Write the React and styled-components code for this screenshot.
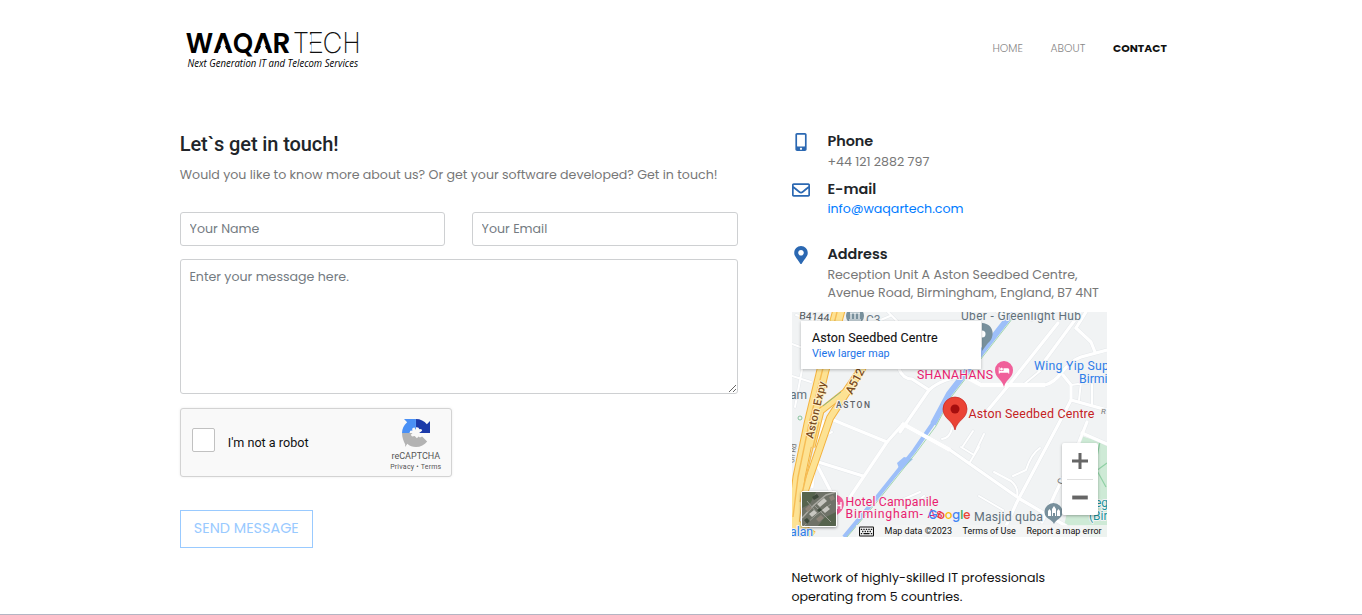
import React from "react";
import styled, { createGlobalStyle } from "styled-components";
import { FaMobileAlt, FaRegEnvelope, FaMapMarkerAlt, FaBed, FaRegKeyboard } from "react-icons/fa";

const Global = createGlobalStyle`
  *, *::before, *::after { box-sizing: border-box; }
  html, body { margin: 0; height: 100%; overflow: hidden; background: #fff; }
  body { font-family: Poppins, Inter, "Liberation Sans", sans-serif; font-size: 12.6px; color: #212529; }
  h2, h3, p { margin: 0; }
`;

const Page = styled.div`
  height: 615px;
  overflow: hidden;
  border-bottom: 1px solid #b4b5c3;
`;
const Header = styled.header`
  display: flex;
  justify-content: space-between;
  align-items: flex-start;
  width: 987px;
  height: 130px;
  margin-left: 180px;
  padding-top: 18px;
`;
const Logo = styled.svg`
  display: block;
  width: 184px;
  height: 60px;
`;
const Nav = styled.nav`
  display: flex;
  gap: 27px;
  padding-top: 20px;
`;
const NavLink = styled.a`
  width: ${(p) => p.$w}px;
  font-size: 10.8px;
  line-height: 21px;
  white-space: nowrap;
  font-weight: ${(p) => (p.$active ? 700 : 300)};
  color: ${(p) => (p.$active ? "#111" : "#888")};
`;
const Main = styled.main`
  display: grid;
  grid-template-columns: 558px 320px;
  column-gap: 53.6px;
  margin-left: 179.8px;
`;
const Title = styled.h2`
  font: 500 20px/28px Roboto, sans-serif;
  letter-spacing: -0.1px;
`;
const Line = styled.p`
  font-size: 12.6px;
  line-height: ${(p) => p.$lh || 18}px;
  color: ${(p) => p.$color || "#777"};
  white-space: nowrap;
`;
const Intro = styled(Line)`
  padding-top: 3px;
  line-height: 27px;
`;
const Label = styled.h3`
  font-size: 14.4px;
  line-height: 22px;
  font-weight: 600;
  color: #212529;
`;
const Detail = styled(Line)`
  position: relative;
  top: ${(p) => p.$drop || 0}px;
`;
const Form = styled.form`
  display: flex;
  flex-direction: column;
  align-items: flex-start;
  margin-top: 24px;
`;
const Fields = styled.div`
  display: grid;
  grid-template-columns: 265px 266px;
  gap: 27px;
  margin-bottom: 13px;
`;
const Input = styled.input`
  width: 100%;
  height: 34px;
  padding: 0 8.8px;
  border: 1px solid #ced0d2;
  border-radius: 3px;
  font: inherit;
  &::placeholder { color: #747b82; opacity: 1; }
`;
const Message = styled.textarea`
  display: block;
  width: 558px;
  height: 135px;
  padding: 7px 8.6px;
  border: 1px solid #ced0d2;
  border-radius: 3px;
  font: inherit;
  line-height: 20px;
  resize: vertical;
  &::placeholder { color: #747b82; opacity: 1; }
`;
const Captcha = styled.div`
  display: flex;
  align-items: center;
  width: 272px;
  height: 69px;
  margin: 14px 0 33px;
  padding: 0 9px 0 11px;
  border: 1px solid #d3d3d3;
  border-radius: 3px;
  background: #f9f9f9;
  box-shadow: 0 0 3px rgba(0, 0, 0, 0.08);
  font-family: Roboto, sans-serif;
`;
const CheckBox = styled.span`
  width: 23px;
  height: 24px;
  margin: -5px 13px 0 0;
  border: 1px solid #c1c1c1;
  border-radius: 2px;
  background: #fff;
`;
const CaptchaLabel = styled.span`
  flex: 1;
  font-size: 12.6px;
  line-height: 16px;
  color: #111;
`;
const Brand = styled.div`
  display: flex;
  flex-direction: column;
  align-items: center;
  width: 52px;
  padding-top: 6px;
  color: #555;
  white-space: nowrap;
`;
const BrandName = styled.span`
  margin-top: 3px;
  font-size: 9px;
  line-height: 12px;
`;
const BrandLinks = styled.span`
  font-size: 7px;
  line-height: 10px;
  letter-spacing: 0.22px;
`;
const Send = styled.button`
  width: 133px;
  height: 38px;
  padding: 0 0 2px;
  border: 1px solid #99caff;
  background: #fff;
  color: #99caff;
  font: inherit;
  font-size: 14.4px;
`;
const Contact = styled.section`
  display: grid;
  grid-template-columns: 18px 1fr;
  column-gap: 18px;
  height: ${(p) => p.$h}px;
`;
const IconBox = styled.span`
  display: flex;
  justify-content: center;
  padding: 3px 0 0 1px;
  color: #2b68b2;
  font-size: 18px;
  svg { flex: none; }
`;
const MapFrame = styled.div`
  position: relative;
  width: 315px;
  height: 225px;
  margin-left: 0.6px;
  overflow: hidden;
  font-family: Roboto, sans-serif;
`;
const MapArt = styled.svg`
  display: block;
  width: 315px;
  height: 225px;
`;
const MapCard = styled.div`
  position: absolute;
  left: 9px;
  top: 9px;
  width: 180px;
  height: 48px;
  padding: 9px 11px;
  background: #fff;
  box-shadow: 0 1px 3px rgba(0, 0, 0, 0.25);
`;
const CardTitle = styled.div`
  font-size: 12.5px;
  line-height: 16px;
  letter-spacing: 0.1px;
  -webkit-text-stroke: 0.1px #111;
  color: #111;
`;
const CardLink = styled.div`
  font-size: 10.8px;
  line-height: 15px;
  color: #1a73e8;
`;
const Zoom = styled.div`
  position: absolute;
  left: 270px;
  top: 131px;
  width: 36px;
  height: 72px;
  padding: 0 5px;
  border-radius: 2px;
  background: #fff;
  box-shadow: 0 1px 3px rgba(0, 0, 0, 0.3);
`;
const ZoomIcon = styled.svg`
  display: block;
  width: 26px;
  height: 36px;
  fill: #666;
  & + & { border-top: 1px solid #e0e0e0; }
`;
const Thumb = styled.svg`
  position: absolute;
  left: 9px;
  top: 179px;
  width: 36px;
  height: 36px;
  border: 1px solid #fff;
  border-radius: 2px;
  box-shadow: 0 1px 3px rgba(0, 0, 0, 0.4);
`;
const MapFooter = styled.div`
  position: absolute;
  right: 0;
  bottom: 0;
  display: flex;
  align-items: center;
  gap: 10.6px;
  width: 251px;
  height: 12px;
  padding-left: 3px;
  background: rgba(245, 245, 245, 0.8);
  font-size: 9px;
  line-height: 12px;
  color: #111;
  white-space: nowrap;
`;
const Summary = styled.div`
  padding-top: 31px;
`;

const ROADS = [
  "M107 57 Q111 67 120 67 L137 78 Q150 66 176 64 L189 73 L253 73 Q263 70 269 61 Q280 48 289 45 L315 38",
  "M266 11 L216 74 L196 98", "M288 1 L246 58",
  "M284 16 L299 30 L303 40", "M294 0 L284 16", "M271 63 L279 73 L279 88 L315 98",
  "M279 88 L266 113 L225 190 L209 225", "M137 78 L108 120",
  "M95 130 L51 112 L37 106", "M111 112 L158 138 L228 187 L274 214",
  "M111 112 L95 130 L58 185", "M23 149 L71 164", "M23 149 L40 182 L48 199",
  "M31 109 L23 149 L20 175", "M295 110 L279 150 L264 180 L250 210", "M290 121 L315 132",
];
const MINOR = [
  "M150 127 Q158 126 160 116 M171 134 L181 119 M169 135 L182 143 M182 143 L192 122 M178 150 L187 135",
  "M202 160 L219 169 Q227 176 225 184 M187 184 L211 198", "M221 164 L234 158 Q239 142 248 136",
  "M0 32 L27 42 M4 3 L24 9 M13 42 L3 95 M0 64 L19 70", "M96 0 L109 13 M70 16 L98 4",
  "M40 120 L14 133 M105 190 L128 180 M116 197 L132 184", "M279 73 L315 68 M289 70 L287 88 M300 70 L300 94",
  "M205 0 L240 8 M248 59 L231 73",
];

function CityMap() {
  return (
    <MapArt viewBox="0 0 315 225" fontFamily="Roboto, sans-serif">
      <rect width="315" height="225" fill="#f1f3f4" />
      <path d="M289 124 L315 132 V225 H297 L294 214 H272 L284 160 Z" fill="#ceead6" />
      <path d="M308 130 L303 155 L314 175 M315 151 L300 162 M282 190 L315 195" fill="none" stroke="#8fd0a4" strokeWidth="1.2" />
      <g fill="none" stroke="#e4e7ea" strokeLinecap="round" strokeLinejoin="round">
        {MINOR.map((d) => <path key={d} d={d} strokeWidth="3" />)}
        {ROADS.map((d) => <path key={d} d={d} strokeWidth="4" />)}
      </g>
      <g fill="none" stroke="#fff" strokeLinecap="round" strokeLinejoin="round">
        {MINOR.map((d) => <path key={d} d={d} strokeWidth="2" />)}
        {ROADS.map((d) => <path key={d} d={d} strokeWidth="3.2" />)}
      </g>
      <path d="M221 0 L157 82 L141 112" fill="none" stroke="#9dbff9" strokeWidth="6" />
      <path d="M142 110 L122 139 L106 159 L82 189 L52 225" fill="none" stroke="#9dbff9" strokeWidth="4.2" />
      <path d="M105 151 L112 145 L121 147 L108 159 Z" fill="#9dbff9" />
      <path d="M224 2 L160 84 L144 114 L124 141 L84 191 L55 225" fill="none" stroke="#8fcf9d" strokeWidth="0.8" />
      <path d="M111 112 L158 138 M176 66 L189 73 L253 73" fill="none" stroke="#fff" strokeWidth="4" />
      <g fill="none" strokeLinejoin="round">
        <path d="M47 -2 L31 58 L18 112 L7 165 L1 212 L20 225" stroke="#f3b23f" strokeWidth="13" />
        <path d="M75 48 L53 80 L29 99 L20 135" stroke="#f3b23f" strokeWidth="7" />
        <path d="M71 55 L38 106 L27 138 L9 190" stroke="#f3b23f" strokeWidth="8" />
        <path d="M47 -2 L31 58 L18 112 L7 165 L1 212 L20 225" stroke="#fde293" strokeWidth="11" />
        <path d="M75 48 L53 80 L29 99 L20 135" stroke="#fde293" strokeWidth="5" />
        <path d="M71 55 L38 106 L27 138 L9 190" stroke="#fde293" strokeWidth="6" />
        <path d="M45 0 L30 60 L17 112 L6 165 L1 205 M27 110 L8 190" stroke="#f6bd55" strokeWidth="1.4" />
      </g>
      <g fill="none" stroke="#6fb78a" strokeWidth="0.8"><path d="M31 94 L49 80" /><circle cx="8" cy="106" r="2" /></g>
      <g stroke="#f1f3f4" strokeWidth="2" paintOrder="stroke" strokeLinejoin="round">
        <text x="7" y="7" fontSize="10.5" fill="#4d5358" transform="rotate(5 7 7)">B4144</text>
        <text x="74" y="12" fontSize="12" fill="#6b7b86">C3</text>
        <text x="169" y="8" fontSize="12" fill="#5f707b" textLength="120">Uber - Greenlight Hub</text>
        <text x="-2" y="87" fontSize="12" fill="#5f707b">am</text>
        <text x="44" y="95.5" fontSize="8.5" fontWeight="500" fill="#5c6166" textLength="34">ASTON</text>
        <text transform="translate(21 127) rotate(-77)" fontSize="11" fontWeight="500" stroke="#fff1c8" fill="#7a4b1c" textLength="58">Aston Expy</text>
        <text transform="translate(60 83) rotate(-62)" fontSize="11.5" fontWeight="500" stroke="#fff1c8" fill="#7a4b1c">A512</text>
        <text transform="translate(2 151) rotate(-82)" fontSize="7.5" fill="#777">on Rd</text>
        <text x="125" y="67" fontSize="12.300" fill="#e91e70" textLength="76">SHANAHANS</text>
        <text x="242" y="58" fontSize="12.300" fill="#2f7de9" textLength="75">Wing Yip Sup</text>
        <text x="287" y="71" fontSize="12.300" fill="#2f7de9">Birmi</text>
        <text x="176.500" y="106" fontSize="12.500" fill="#c5221f" textLength="126">Aston Seedbed Centre</text>
        <text x="309" y="102" fontSize="8" fill="#777" fontStyle="italic">R</text>
        <text x="53.500" y="194" fontSize="12.300" fill="#e91e70" textLength="93">Hotel Campanile</text>
        <text x="53.500" y="206" fontSize="12.300" fill="#e91e70" textLength="97">Birmingham- As</text>
        <text x="182" y="209" fontSize="12.300" fill="#5f707b" textLength="69">Masjid quba</text>
        <text x="-2" y="224" fontSize="12.300" fill="#2f7de9">alan</text>
        <text x="303" y="195" fontSize="12" fill="#1c939b">eg</text>
        <text x="297" y="208" fontSize="12" fill="#1c939b">(Bir</text>
        <text transform="translate(271 173) rotate(-72)" fontSize="9" fill="#666">C</text>
      </g>
      <text x="136.500" y="207" fontSize="13" fontFamily="Poppins, sans-serif" fontWeight="500" textLength="42" lengthAdjust="spacingAndGlyphs">
        <tspan fill="#4285f4">G</tspan><tspan fill="#ea4335">o</tspan><tspan fill="#fbbc04">o</tspan><tspan fill="#4285f4">g</tspan><tspan fill="#34a853">l</tspan><tspan fill="#ea4335">e</tspan>
      </text>
      <g>
        <circle cx="63" cy="4" r="9" fill="#78909c" />
        <path d="M58 1 H68 M59 1 V7 M63 1 V7 M67 1 V7 M57 8 H69" stroke="#fff" strokeWidth="1.1" />
      </g>
      <path d="M190 11 C203 12 203 26 196 31 L190 39 Z" fill="#78909c" /><circle cx="190" cy="22" r="3.5" fill="#fff" />
      <path d="M212 75 C210 67 203 66 203 58 A9 9 0 0 1 221 58 C221 66 214 67 212 75 Z" fill="#f0609a" />
      <FaBed x="206.5" y="53" size="11" color="#fff" />
      <path d="M44 183 C53 184 55 196 46 202 L44 204 Z" fill="#f0609a" />
      <path d="M45 190 V197 M49 190 V197 M45 193.500 H49" stroke="#fff" strokeWidth="1.300" />
      <path d="M262 212 C260 207 252.500 207 252.500 200 A9 9 0 0 1 270.500 200 C270.500 207 264 207 262 212 Z" fill="#78909c" />
      <path d="M256 204 V199 L257.500 197 L259 199 V204 Z M260 204 V197 L262 194 L264 197 V204 H263 V201 H261 V204 Z M265 204 V199 L266.500 197 L268 199 V204 Z" fill="#fff" />
      <path d="M163 118 C161 108 151 107 151 97 A12 12 0 0 1 175 97 C175 107 165 108 163 118 Z" fill="#ea4335" stroke="#c5221f" strokeWidth="0.7" />
      <circle cx="163" cy="97" r="4.500" fill="#a50e0e" />
    </MapArt>
  );
}

function Satellite() {
  return (
    <Thumb viewBox="0 0 34 34">
      <rect width="34" height="34" fill="#6f7268" />
      <path d="M0 0 H14 L8 12 L0 16 Z M22 26 L34 20 V34 H16 Z" fill="#56644e" />
      <path d="M0 26 L12 13 L24 3 L34 0" fill="none" stroke="#aaa9a2" strokeWidth="1.5" />
      <path d="M2 34 L14 23 L29 12 M12 13 L29 30 M5 9 L15 21" fill="none" stroke="#999b93" />
      <path d="M15 12 L22 6 L25 9 L18 15 Z M7 22 L12 18 L15 21 L10 25 Z M20 18 L25 14 L28 17 L23 21 Z" fill="#c8c7c1" />
      <path d="M3 17 L7 13 L10 16 L6 20 Z M14 27 L19 23 L22 26 L17 30 Z M27 5 L31 3 L33 7 L29 9 Z" fill="#8d8479" />
      <path d="M10 5 L15 2 L17 5 L12 8 Z M15 18 L18 16 L20 18 L17 20 Z M2 28 L5 26 L8 29 L5 32 Z" fill="#3f4a3c" />
    </Thumb>
  );
}

function RecaptchaMark() {
  return (
    <svg width="28" height="28" viewBox="0 0 64 64">
      <path fill="#1c3aa9" d="M64 31.955V4.687l-7.160 7.160C50.948 4.674 42.033.093 32.050.093v18.500l5 1 3 4 4-1 2 4-7 5.360H64z" />
      <path fill="#4a90f5" d="M31.862.094H4.594l7.160 7.160C4.580 13.147 0 22.060 0 32.046h17l2-5 5-1-1-4 5-3 3.860 6V.094z" />
      <path fill="#b3b3b3" d="M0 32.045C0 42 4 52 7.200 57.943V64l5-7.200c5 5 12 7.200 19.800 7.200 10.390 0 19.622-4.960 25.476-12.643L46 40l-5 2-3-2-4 4-5-5-6 1-3-4 4-3.955z" />
    </svg>
  );
}

const BOLD = [["W", 5.8, 27.4], ["A", 33, 20], ["Q", 53, 20], ["A", 73, 20], ["R", 92.5, 18]];
const THIN = [["T", 113, 16], ["E", 127, 17], ["C", 142.5, 20], ["H", 162.5, 18]];

function BrandLogo() {
  const letters = (list) =>
    list.map(([ch, x, w]) => (
      <tspan key={x} x={x} textLength={w} lengthAdjust="spacingAndGlyphs">{ch}</tspan>
    ));
  return (
    <Logo viewBox="0 0 184 60">
      <text y="35.200" fontFamily="Poppins, sans-serif" fontWeight="600" fontSize="29" fill="#000">{letters(BOLD)}</text>
      <path d="M43 22.500 L48 36 H38 Z M83 22.500 L88 36 H78 Z" fill="#fff" />
      <text y="35.200" fontFamily="Inter, sans-serif" fontWeight="200" fontSize="28" fill="#111">{letters(THIN)}</text>
      <path d="M128 16.500 H131.500 V24 H128 Z M128 26.500 H131.500 V33.500 H128 Z" fill="#fff" />
      <text x="7.500" y="48.500" fontFamily="Open Sans, sans-serif" fontStyle="italic" fontSize="10.300" textLength="170.500" lengthAdjust="spacingAndGlyphs" fill="#000">Next Generation IT and Telecom Services</text>
    </Logo>
  );
}

export default function App() {
  return (
    <Page>
      <Global />
      <Header>
        <BrandLogo />
        <Nav>
          <NavLink $w={31}>HOME</NavLink>
          <NavLink $w={35.5}>ABOUT</NavLink>
          <NavLink $w={54} $active>CONTACT</NavLink>
        </Nav>
      </Header>
      <Main>
        <div>
          <Title>Let`s get in touch!</Title>
          <Intro>Would you like to know more about us? Or get your software developed? Get in touch!</Intro>
          <Form>
            <Fields>
              <Input placeholder="Your Name" />
              <Input placeholder="Your Email" />
            </Fields>
            <Message placeholder="Enter your message here." />
            <Captcha>
              <CheckBox />
              <CaptchaLabel>I'm not a robot</CaptchaLabel>
              <Brand>
                <RecaptchaMark />
                <BrandName>reCAPTCHA</BrandName>
                <BrandLinks>Privacy • Terms</BrandLinks>
              </Brand>
            </Captcha>
            <Send type="button">SEND MESSAGE</Send>
          </Form>
        </div>
        <aside>
          <Contact $h={48}>
            <IconBox><FaMobileAlt /></IconBox>
            <div>
              <Label>Phone</Label>
              <Detail $drop={1}>+44 121 2882 797</Detail>
            </div>
          </Contact>
          <Contact $h={65}>
            <IconBox><FaRegEnvelope /></IconBox>
            <div>
              <Label>E-mail</Label>
              <Detail $color="#007bff">info@waqartech.com</Detail>
            </div>
          </Contact>
          <Contact $h={69}>
            <IconBox><FaMapMarkerAlt /></IconBox>
            <div>
              <Label>Address</Label>
              <Detail $drop={1}>Reception Unit A Aston Seedbed Centre,</Detail>
              <Detail $drop={1}>Avenue Road, Birmingham, England, B7 4NT</Detail>
            </div>
          </Contact>
          <MapFrame>
            <CityMap />
            <MapCard>
              <CardTitle>Aston Seedbed Centre</CardTitle>
              <CardLink>View larger map</CardLink>
            </MapCard>
            <Zoom>
              <ZoomIcon viewBox="0 0 26 36"><path d="M5 16.500 H11.500 V10 H14.500 V16.500 H21 V19.500 H14.500 V26 H11.500 V19.500 H5 Z" /></ZoomIcon>
              <ZoomIcon viewBox="0 0 26 36"><path d="M5 16 H21 V20 H5 Z" /></ZoomIcon>
            </Zoom>
            <Satellite />
            <MapFooter>
              <FaRegKeyboard size={15} />
              <span>Map data ©2023</span>
              <span>Terms of Use</span>
              <span>Report a map error</span>
            </MapFooter>
          </MapFrame>
          <Summary>
            <Line $lh={19} $color="#111">Network of highly-skilled IT professionals</Line>
            <Line $lh={19} $color="#111">operating from 5 countries.</Line>
          </Summary>
        </aside>
      </Main>
    </Page>
  );
}
